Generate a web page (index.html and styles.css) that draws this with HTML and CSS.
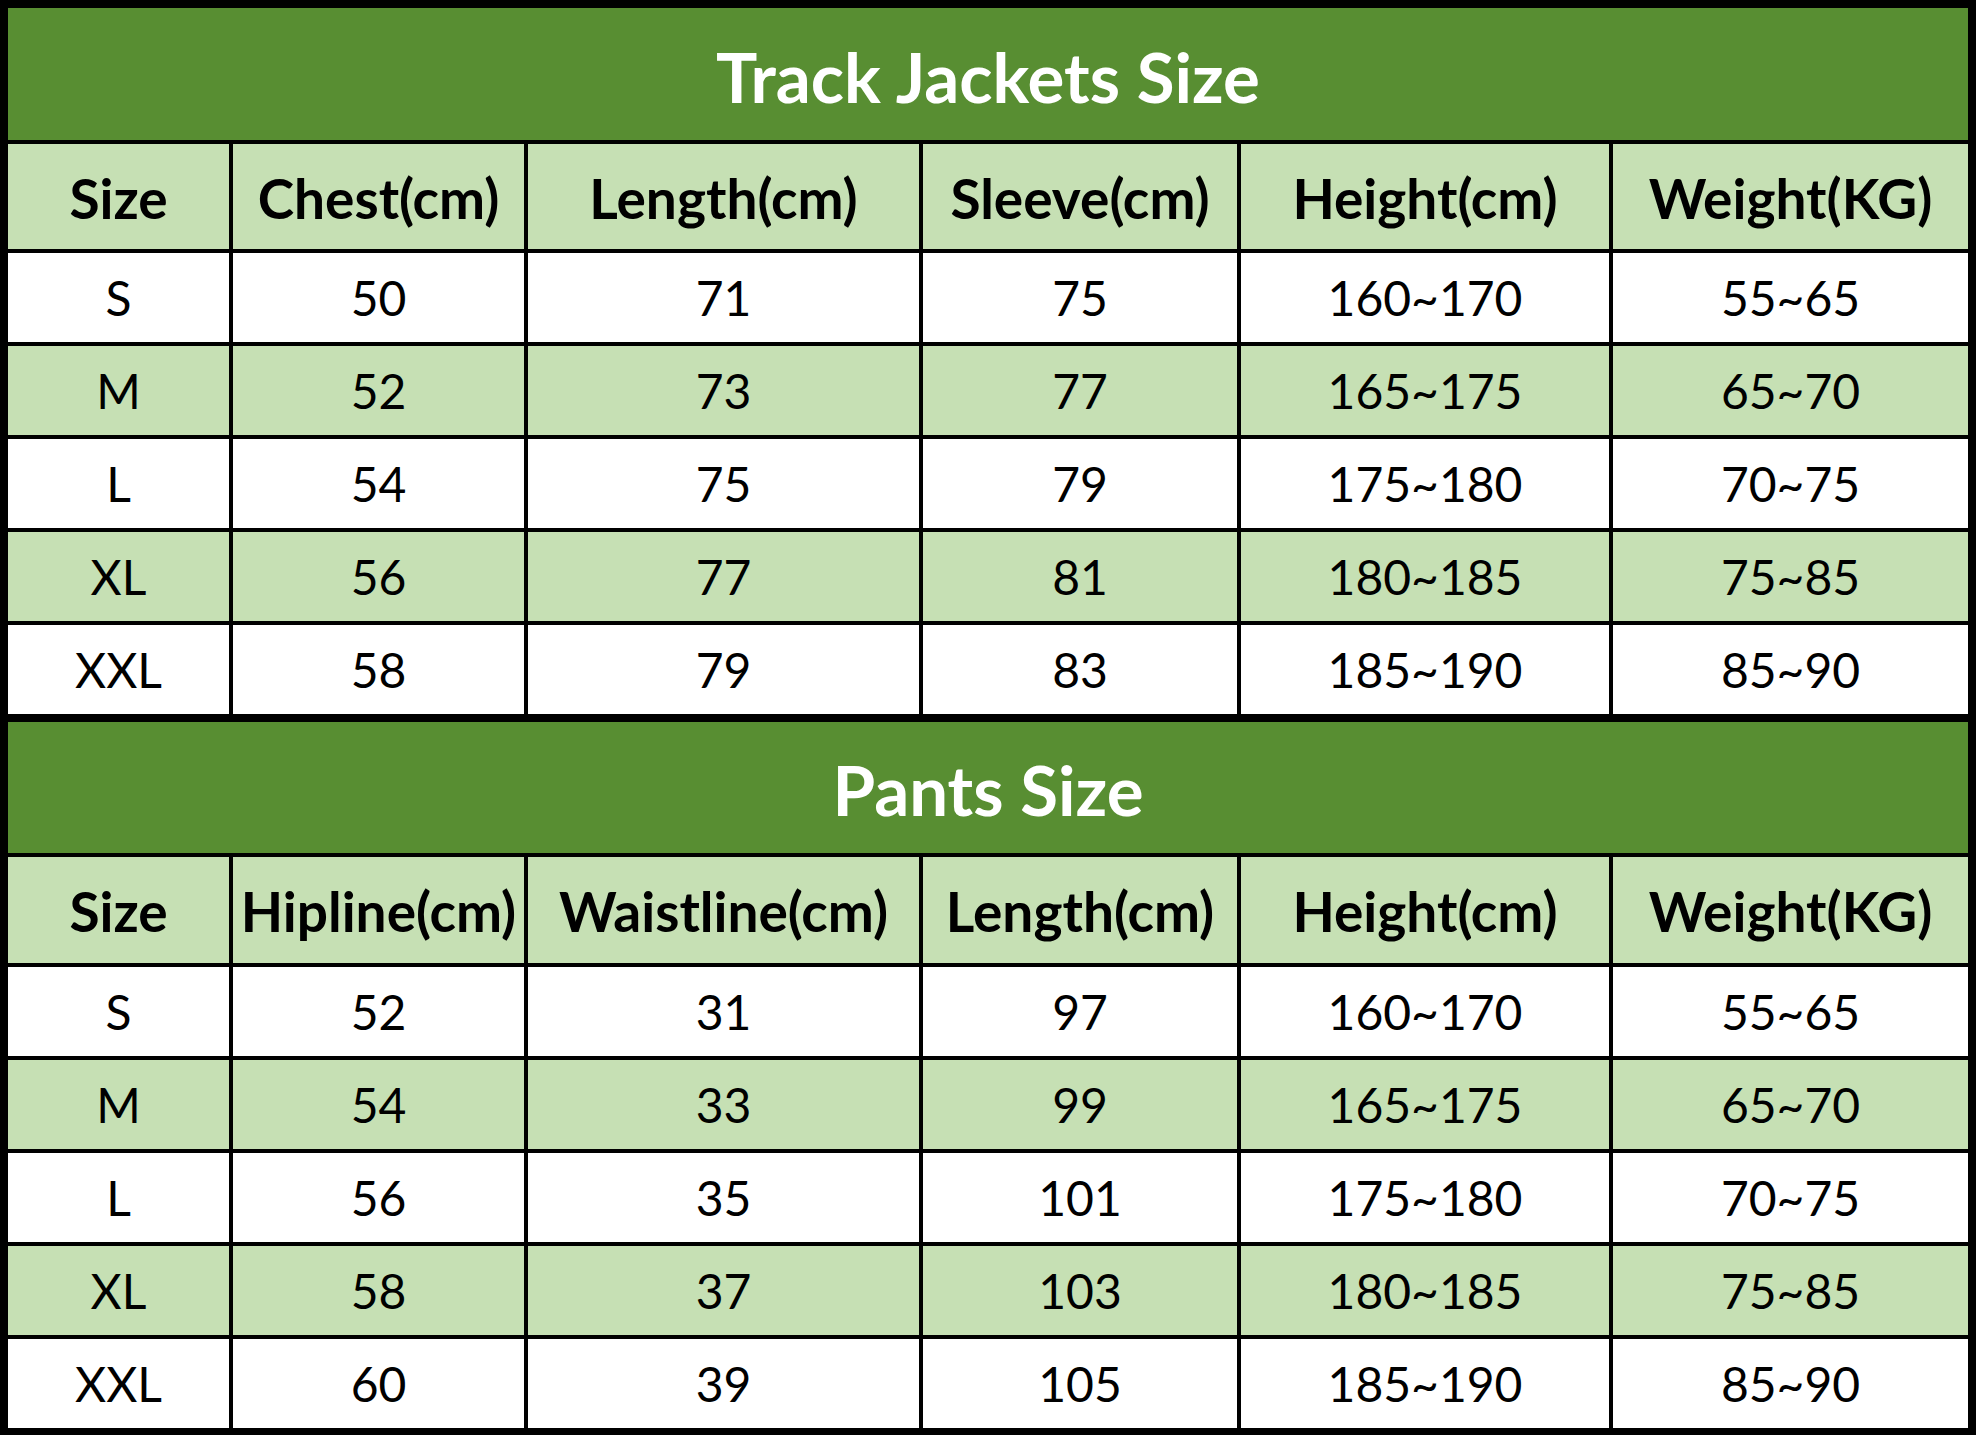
FILE: index.html
```html
<!DOCTYPE html>
<html lang="en">
<head>
<meta charset="utf-8">
<title>Size Chart</title>
<link rel="stylesheet" href="styles.css">
</head>
<body>
<main class="sheet">
  <section class="chart chart-top">
    <h1 class="title">Track Jackets Size</h1>
    <div class="cell head">Size</div>
    <div class="cell head">Chest(cm)</div>
    <div class="cell head">Length(cm)</div>
    <div class="cell head">Sleeve(cm)</div>
    <div class="cell head">Height(cm)</div>
    <div class="cell head">Weight(KG)</div>

    <div class="cell">S</div><div class="cell">50</div><div class="cell">71</div><div class="cell">75</div><div class="cell">160~170</div><div class="cell">55~65</div>
    <div class="cell alt">M</div><div class="cell alt">52</div><div class="cell alt">73</div><div class="cell alt">77</div><div class="cell alt">165~175</div><div class="cell alt">65~70</div>
    <div class="cell">L</div><div class="cell">54</div><div class="cell">75</div><div class="cell">79</div><div class="cell">175~180</div><div class="cell">70~75</div>
    <div class="cell alt">XL</div><div class="cell alt">56</div><div class="cell alt">77</div><div class="cell alt">81</div><div class="cell alt">180~185</div><div class="cell alt">75~85</div>
    <div class="cell">XXL</div><div class="cell">58</div><div class="cell">79</div><div class="cell">83</div><div class="cell">185~190</div><div class="cell">85~90</div>
  </section>

  <section class="chart chart-bottom">
    <h1 class="title">Pants Size</h1>
    <div class="cell head">Size</div>
    <div class="cell head">Hipline(cm)</div>
    <div class="cell head">Waistline(cm)</div>
    <div class="cell head">Length(cm)</div>
    <div class="cell head">Height(cm)</div>
    <div class="cell head">Weight(KG)</div>

    <div class="cell">S</div><div class="cell">52</div><div class="cell">31</div><div class="cell">97</div><div class="cell">160~170</div><div class="cell">55~65</div>
    <div class="cell alt">M</div><div class="cell alt">54</div><div class="cell alt">33</div><div class="cell alt">99</div><div class="cell alt">165~175</div><div class="cell alt">65~70</div>
    <div class="cell">L</div><div class="cell">56</div><div class="cell">35</div><div class="cell">101</div><div class="cell">175~180</div><div class="cell">70~75</div>
    <div class="cell alt">XL</div><div class="cell alt">58</div><div class="cell alt">37</div><div class="cell alt">103</div><div class="cell alt">180~185</div><div class="cell alt">75~85</div>
    <div class="cell">XXL</div><div class="cell">60</div><div class="cell">39</div><div class="cell">105</div><div class="cell">185~190</div><div class="cell">85~90</div>
  </section>
</main>
</body>
</html>
```

FILE: styles.css
```css
* {
  box-sizing: border-box;
}

html,
body {
  margin: 0;
  padding: 0;
  background: #000;
}

.sheet {
  width: 1976px;
  height: 1435px;
  background: #000;
  padding: 8px 8px 7px 8px;
  display: flex;
  flex-direction: column;
  gap: 8px;
  font-family: "Lato", "Open Sans", sans-serif;
}

.chart {
  display: grid;
  grid-template-columns: 221px 291px 391px 314px 368px 355px;
  gap: 4px;
}

.chart-top {
  grid-template-rows: 132px 105px repeat(5, 89px);
}

.chart-bottom {
  grid-template-rows: 131px 106px repeat(5, 89px);
}

.title {
  grid-column: 1 / -1;
  margin: 0;
  background: #588e32;
  color: #fff;
  font-size: 69px;
  font-weight: 700;
  display: flex;
  align-items: center;
  justify-content: center;
  padding-top: 4px;
}

.cell {
  background: #fff;
  color: #000;
  font-size: 48px;
  font-weight: 400;
  display: flex;
  align-items: center;
  justify-content: center;
  white-space: nowrap;
  overflow: visible;
}

.cell.head {
  background: #c6e0b4;
  font-size: 55px;
  font-weight: 700;
  padding-top: 2px;
}

.cell.alt {
  background: #c6e0b4;
}
```
